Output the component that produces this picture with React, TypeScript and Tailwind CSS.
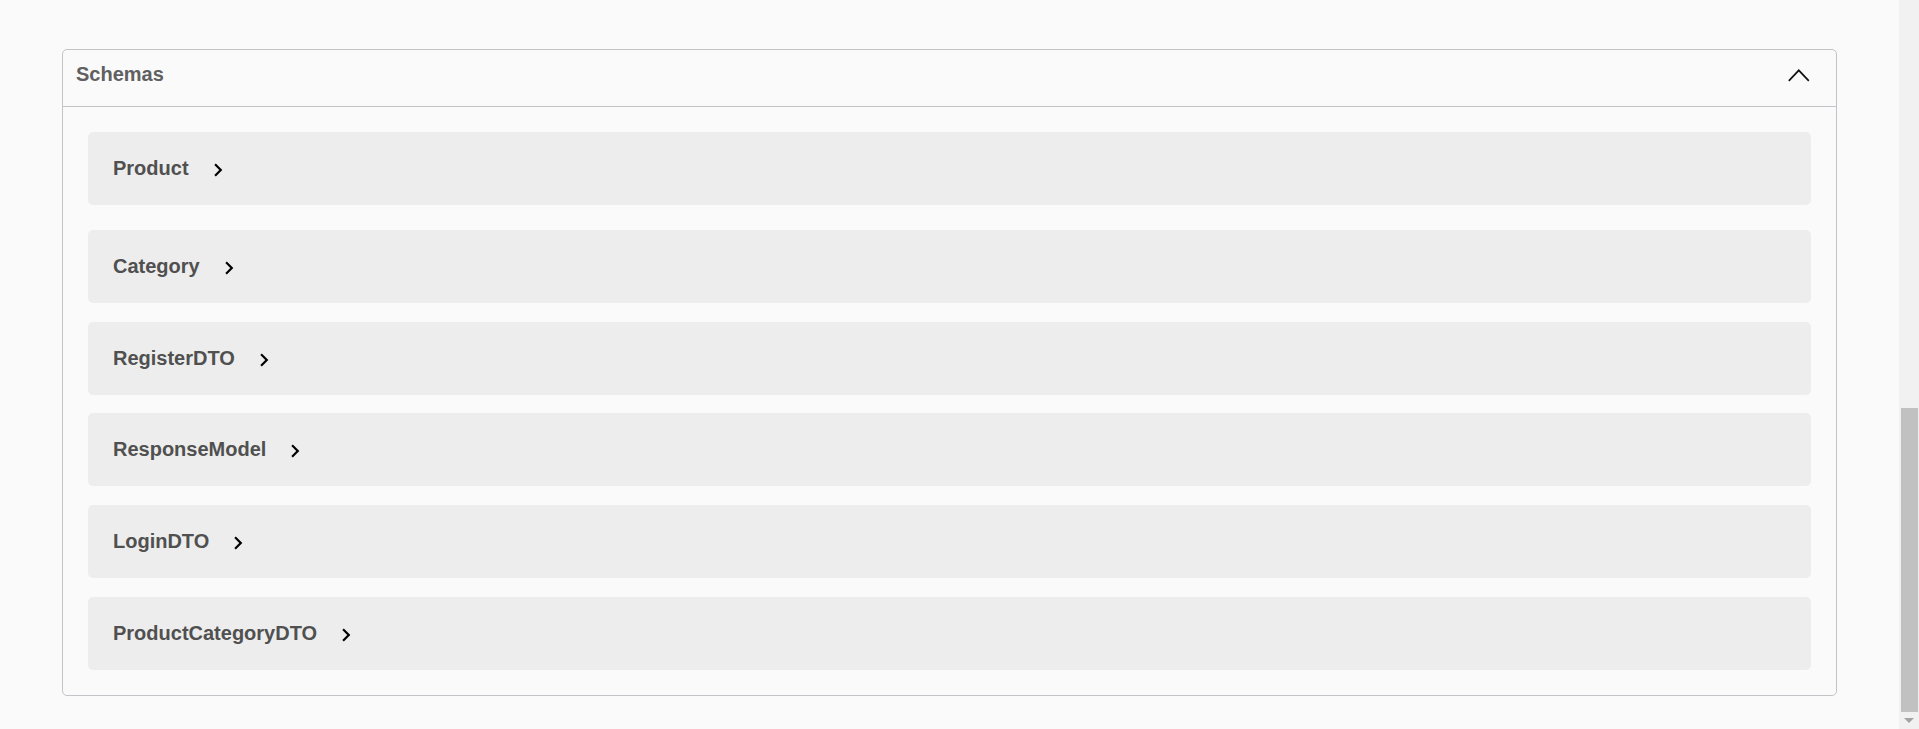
import React from "react";

const items: { name: string; cls: string }[] = [
  { name: "Product", cls: "mt-[25px] mb-[25px]" },
  { name: "Category", cls: "mb-[19px]" },
  { name: "RegisterDTO", cls: "mb-[18px]" },
  { name: "ResponseModel", cls: "mb-[19px]" },
  { name: "LoginDTO", cls: "mb-[19px]" },
  { name: "ProductCategoryDTO", cls: "mb-[25px]" },
];

function ChevronRight() {
  return (
    <svg width="26" height="26" viewBox="0 0 24 24" className="ml-[16px] mt-[3px] shrink-0">
      <path d="M10 6L8.59 7.41 13.17 12l-4.58 4.59L10 18l6-6z" fill="#000" />
    </svg>
  );
}

function ChevronUp() {
  return (
    <svg width="22" height="13" viewBox="0 0 22 13" className="mt-[19px] mr-[26px] shrink-0">
      <polyline points="0.8,11.8 10.8,1.3 20.8,11.8" fill="none" stroke="#111" strokeWidth="1.7" />
    </svg>
  );
}

export default function App() {
  return (
    <div className="flex w-full h-[729px] overflow-hidden bg-[#fafafa] font-['Liberation_Sans',Arial,sans-serif]">
      <div className="flex-1 px-[62px] pt-[49px]">
        <section className="border border-[#c2c4c8] rounded-[5px]">
          <div className="flex h-[57px] items-start justify-between border-b border-[#c2c4c8]">
            <h4 className="mt-[13px] pl-[13px] text-[20px] leading-[23px] font-bold text-[#606060]">Schemas</h4>
            <ChevronUp />
          </div>
          <div className="flex flex-col">
            {items.map((it) => (
              <div
                key={it.name}
                className={`mx-[25px] h-[73px] rounded-[5px] bg-[#ededed] pl-[25px] flex items-center ${it.cls}`}
              >
                <span className="text-[20px] leading-[23px] font-bold text-[#505050]">{it.name}</span>
                <ChevronRight />
              </div>
            ))}
          </div>
        </section>
      </div>
      <div className="w-[20px] h-full bg-[#f1f1f1] flex flex-col justify-end">
        <div className="ml-[2px] w-[17px] h-[304px] bg-[#c1c1c1]" />
        <div className="h-[17px] flex items-center justify-center">
          <svg width="10" height="6" viewBox="0 0 10 6">
            <polygon points="0,0 10,0 5,5" fill="#a3a3a3" />
          </svg>
        </div>
      </div>
    </div>
  );
}
